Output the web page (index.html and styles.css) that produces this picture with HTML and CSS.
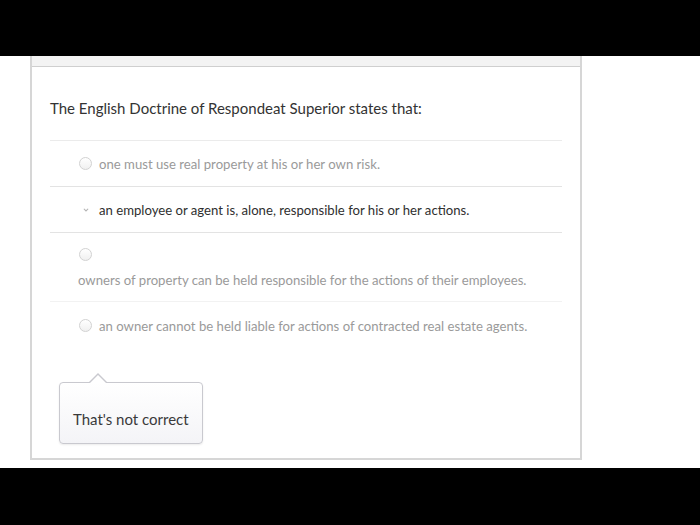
FILE: index.html
```html
<!DOCTYPE html>
<html>
<head>
<meta charset="utf-8">
<link rel="stylesheet" href="styles.css">
</head>
<body>
<div class="topbar"></div>
<div class="stage">
  <div class="card">
    <div class="card-head"></div>
    <div class="question">The English Doctrine of Respondeat Superior states that:</div>
    <div class="answers">
      <div class="answer">
        <span class="radio"></span>
        <span class="label">one must use real property at his or her own risk.</span>
      </div>
      <div class="answer selected">
        <span class="mark"><svg width="12" height="12" viewBox="0 0 12 12"><path d="M4.2 5.2 L6 6.9 L7.8 5.2" fill="none" stroke="#b5b5b5" stroke-width="1.1" stroke-linecap="round"/></svg></span>
        <span class="label">an employee or agent is, alone, responsible for his or her actions.</span>
      </div>
      <div class="answer stacked">
        <span class="radio"></span>
        <span class="label">owners of property can be held responsible for the actions of their employees.</span>
      </div>
      <div class="answer last">
        <span class="radio"></span>
        <span class="label">an owner cannot be held liable for actions of contracted real estate agents.</span>
      </div>
    </div>
    <div class="tip">That's not correct</div>
  </div>
</div>
<div class="bottombar"></div>
</body>
</html>
```
FILE: styles.css
```css
html, body {
  margin: 0;
  padding: 0;
  background: #ffffff;
  font-family: Lato, "Open Sans", "Liberation Sans", sans-serif;
}
.topbar {
  height: 56px;
  background: #000;
}
.bottombar {
  height: 57px;
  background: #000;
}
.stage {
  height: 412px;
  padding-left: 30px;
  box-sizing: border-box;
  background: #fff;
}
.card {
  width: 552px;
  height: 404px;
  box-sizing: border-box;
  border: 2px solid #d6d6d6;
  border-top: none;
  background: #fff;
}
.card-head {
  height: 10px;
  background: #f3f3f3;
  border-bottom: 1px solid #cfcfcf;
}
.question {
  padding: 31px 18px 22px 18px;
  font-size: 15px;
  line-height: 20px;
  color: #333;
}
.answers {
  margin: 0 18px;
}
.answer {
  display: flex;
  align-items: center;
  height: 46px;
  box-sizing: border-box;
  border-top: 1px solid #ebebeb;
  padding-left: 28px;
  font-size: 13.15px;
  color: #9a9a9a;
}
.answer.selected {
  color: #2f2f2f;
  padding-top: 1px;
}
.answer.selected + .answer,
.answer.selected {
  border-top-color: #e3e3e3;
}
.answer.last {
  border-top-color: #f2f2f2;
  padding-top: 2px;
}
.radio {
  width: 11px;
  height: 11px;
  border: 1px solid #d2d2d2;
  border-radius: 50%;
  background: linear-gradient(#ffffff, #f0f0f0);
  margin-left: 1px;
  margin-right: 7px;
  flex: none;
}
.mark {
  width: 13px;
  height: 12px;
  margin-left: 1px;
  margin-right: 7px;
  display: flex;
  align-items: center;
  justify-content: center;
  flex: none;
}
.answer.stacked {
  flex-direction: column;
  align-items: flex-start;
  height: 69px;
  padding-top: 15px;
}
.answer.stacked .radio {
  margin: 0 0 0 1px;
}
.answer.stacked .label {
  margin-top: 10px;
  line-height: 18px;
}
.tip {
  position: relative;
  margin: 35px 0 0 27px;
  width: 144px;
  height: 62px;
  box-sizing: border-box;
  border: 1px solid #c9c9cf;
  border-radius: 4px;
  background: linear-gradient(#ffffff, #f4f4f7);
  box-shadow: 0 1px 2px rgba(0,0,0,0.08);
  padding: 26px 0 0 13px;
  font-size: 15px;
  line-height: 20px;
  color: #3a3a3a;
}
.tip::before {
  content: "";
  position: absolute;
  left: 28px;
  top: -10px;
  width: 0;
  height: 0;
  border-left: 10px solid transparent;
  border-right: 10px solid transparent;
  border-bottom: 10px solid #c9c9cf;
}
.tip::after {
  content: "";
  position: absolute;
  left: 29px;
  top: -8px;
  width: 0;
  height: 0;
  border-left: 9px solid transparent;
  border-right: 9px solid transparent;
  border-bottom: 9px solid #ffffff;
}
```
